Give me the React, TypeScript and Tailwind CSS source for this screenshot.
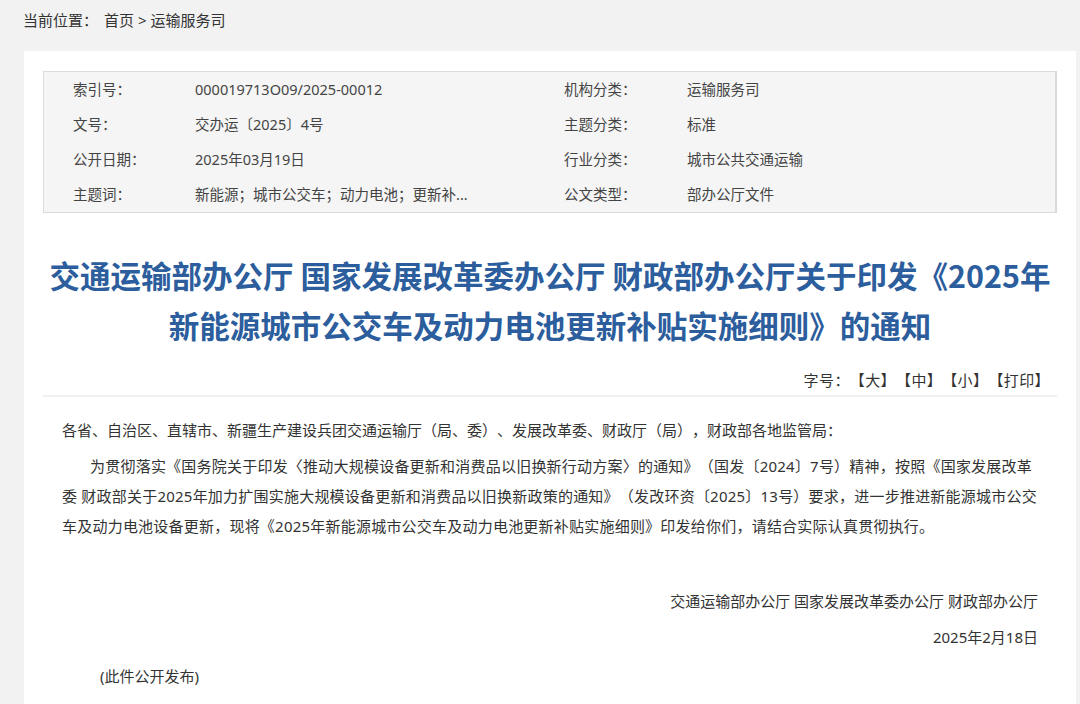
import React from "react";

const meta: [string, string, string, string][] = [
  ["索引号：", "000019713O09/2025-00012", "机构分类：", "运输服务司"],
  ["文号：", "交办运〔2025〕4号", "主题分类：", "标准"],
  ["公开日期：", "2025年03月19日", "行业分类：", "城市公共交通运输"],
  ["主题词：", "新能源；城市公交车；动力电池；更新补...", "公文类型：", "部办公厅文件"],
];

export default function App() {
  return (
    <div className="min-h-screen bg-[#f2f2f2] font-['Noto_Sans','Noto_Sans_CJK_SC',sans-serif] text-[#333] [text-spacing-trim:space-all]">
      {/* breadcrumb */}
      <div className="h-[51px] px-[23px] pt-[10px] text-[15px] leading-5 text-[#333]">
        当前位置：<span className="ml-[6px]">首页</span> &gt; 运输服务司
      </div>

      <div className="ml-6 mr-1 bg-white px-[19px] pt-5 pb-8">
        {/* document metadata */}
        <div className="border border-[#dcdcdc] border-r-2 border-r-[#dadada] bg-[#f5f5f5] pl-[29px]">
          {meta.map((r, i) => (
            <div
              key={i}
              className="grid h-[35px] grid-cols-[122px_369px_123px_1fr] items-center whitespace-nowrap text-[14.5px] text-[#444]"
            >
              <span>{r[0]}</span>
              <span>{r[1]}</span>
              <span>{r[2]}</span>
              <span>{r[3]}</span>
            </div>
          ))}
        </div>

        {/* title */}
        <h1 className="mt-[37px] whitespace-nowrap text-center font-['Noto_Sans_CJK_SC',sans-serif] text-[30.5px] font-bold leading-[50px] text-[#2c5d9c]">
          交通运输部办公厅 国家发展改革委办公厅 财政部办公厅关于印发《2025年
          <br />
          新能源城市公交车及动力电池更新补贴实施细则》的通知
        </h1>

        {/* font size / print controls */}
        <div className="mt-5 whitespace-nowrap pr-[7px] text-right text-[15px] leading-5 tracking-[0.4px] text-[#333]">
          字号：<span className="cursor-pointer">【大】</span>
          <span className="cursor-pointer">【中】</span>
          <span className="cursor-pointer">【小】</span>
          <span className="cursor-pointer">【打印】</span>
        </div>
        <div className="mt-[5px] h-[2px] bg-[#f0f0f0]" />

        {/* body */}
        <div className="mt-[18px] px-[19px] text-[15px] leading-[30px] text-[#333]">
          <p className="whitespace-nowrap">
            各省、自治区、直辖市、新疆生产建设兵团交通运输厅（局、委）、发展改革委、财政厅（局），财政部各地监管局：
          </p>
          <p className="mt-[6px] whitespace-nowrap indent-[28px] tracking-[0.22px]">
            为贯彻落实《国务院关于印发〈推动大规模设备更新和消费品以旧换新行动方案〉的通知》（国发〔2024〕7号）精神，按照《国家发展改革
            <br />
            委 财政部关于2025年加力扩围实施大规模设备更新和消费品以旧换新政策的通知》（发改环资〔2025〕13号）要求，进一步推进新能源城市公交
            <br />
            车及动力电池设备更新，现将《2025年新能源城市公交车及动力电池更新补贴实施细则》印发给你们，请结合实际认真贯彻执行。
          </p>

          <p className="mt-[45px] text-right">交通运输部办公厅 国家发展改革委办公厅 财政部办公厅</p>
          <p className="mt-[6px] text-right">2025年2月18日</p>
          <p className="mt-[9px] pl-[38px]">(此件公开发布)</p>
        </div>
      </div>
    </div>
  );
}
